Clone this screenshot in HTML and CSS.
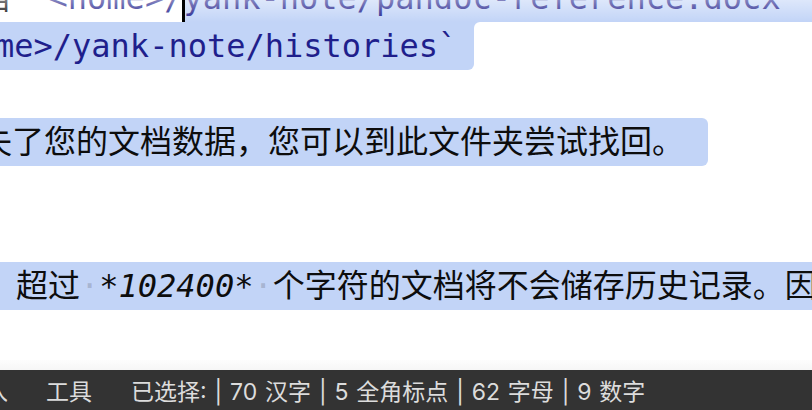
FILE: index.html
```html
<!DOCTYPE html>
<html lang="zh-CN">
<head>
<meta charset="utf-8">
<title>Yank Note</title>
<link rel="stylesheet" href="styles.css">
</head>
<body>
<div class="app">
  <div class="editor">
    <div class="lines">
      <div class="line l1"><span class="pre"><span class="txt">档 </span><span class="code">`&lt;home&gt;/</span></span><span class="cursor"></span><span class="sel grow code">yank-note/pandoc-reference.docx</span></div>
      <div class="line l2"><span class="sel code">me&gt;/yank-note/histories`</span><span class="rest"></span></div>
      <div class="line"></div>
      <div class="line l4"><span class="sel txt">失了您的文档数据，您可以到此文件夹尝试找回。</span></div>
      <div class="line"></div>
      <div class="line"></div>
      <div class="line l7"><span class="sel grow txt">超过<span class="ws">·</span><em class="num">*102400*</em><span class="ws">·</span>个字符的文档将不会储存历史记录。因为文档过大</span></div>
    </div>
    <div class="fade"></div>
    <div class="hscroll"></div>
  </div>
  <div class="status">
    <span class="item first">插入</span>
    <span class="item">工具</span>
    <span class="item stats">已选择: | 70 汉字 | 5 全角标点 | 62 字母 | 9 数字</span>
  </div>
</div>
</body>
</html>
```

FILE: styles.css
```css
:root {
  --sel: #c2d4f7;
}
html, body {
  margin: 0;
  padding: 0;
  background: #fff;
}
body {
  width: 812px;
  height: 410px;
  overflow: hidden;
}
.app {
  display: flex;
  flex-direction: column;
  height: 410px;
}
.editor {
  position: relative;
  flex: 1;
  overflow: hidden;
  display: flex;
  flex-direction: column;
}
.lines {
  flex: 1;
  margin-top: -26px;
  font-family: "DejaVu Sans Mono", "Noto Sans CJK SC", monospace;
  font-size: 32px;
  line-height: 48px;
  color: #111;
  white-space: nowrap;
}
.line {
  height: 48px;
  display: flex;
  align-items: stretch;
}
.sel {
  background: var(--sel);
  display: block;
}
.grow {
  flex: 1;
}
.code {
  color: #1f1f8c;
}
.txt {
  color: #0d0d0d;
}
.pre {
  margin-left: -22px;
  display: block;
}
.cursor {
  position: relative;
  width: 0;
}
.cursor::after {
  content: "";
  position: absolute;
  left: -1px;
  top: 0;
  width: 3px;
  height: 48px;
  background: #000;
  z-index: 2;
}
.l2 {
  background: linear-gradient(var(--sel) 0 8px, transparent 8px);
}
.l2 .sel {
  margin-left: -5px;
  padding-right: 17px;
  border-bottom-right-radius: 6px;
}
.l2 .rest {
  flex: 1;
  background: #fff;
  border-top-left-radius: 6px;
}
.l4 .sel {
  margin-left: -20px;
  padding-right: 24px;
  border-radius: 0 6px 6px 0;
}
.l7 .sel {
  padding-left: 16px;
}
.ws {
  color: rgba(51, 51, 51, 0.2);
}
.num {
  font-style: italic;
  color: #0d0d0d;
}
.fade {
  position: absolute;
  left: 0;
  right: 0;
  top: 0;
  height: 22px;
  background: linear-gradient(rgba(255, 255, 255, 0.45), rgba(255, 255, 255, 0));
  pointer-events: none;
}
.hscroll {
  height: 10px;
  background: linear-gradient(#fdfdfd, #f6f6f6);
}
.status {
  height: 40px;
  background: #333333;
  display: flex;
  align-items: center;
  gap: 38px;
  font-family: Inter, "Noto Sans CJK SC", sans-serif;
  font-size: 23px;
  word-spacing: 1.4px;
  color: #dcdcdc;
  white-space: nowrap;
  overflow: hidden;
}
.item.first {
  margin-left: -38px;
}
.stats {
  margin-left: 1px;
}
```
